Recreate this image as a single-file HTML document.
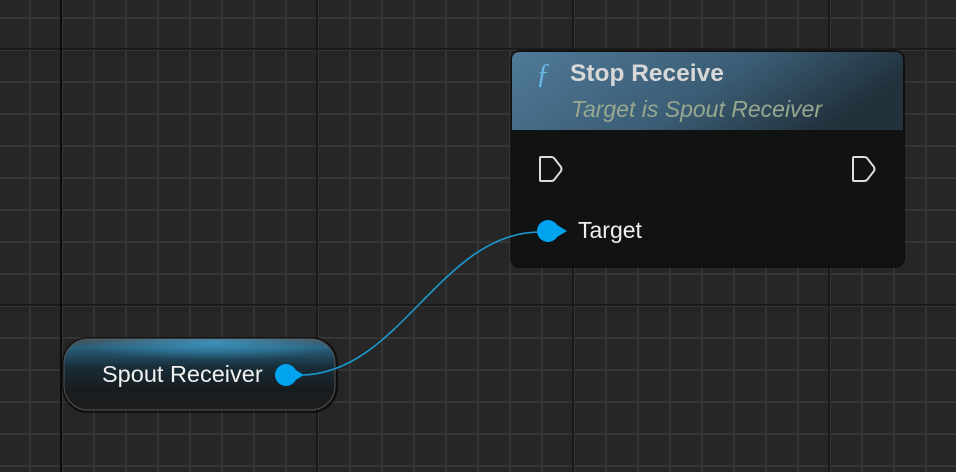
<!DOCTYPE html>
<html><head><style>
html,body{margin:0;padding:0;width:956px;height:472px;overflow:hidden;background:#262626}
svg{position:absolute;left:0;top:0}
.t{font-family:"Liberation Sans",sans-serif;position:absolute;white-space:nowrap}
</style></head><body>
<svg width="956" height="472">
<defs>
<pattern id="minor" x="29" y="17" width="32" height="32" patternUnits="userSpaceOnUse">
<rect x="0" y="0" width="2" height="32" fill="#353535"/><rect x="0" y="0" width="32" height="2" fill="#353535"/>
</pattern>
<linearGradient id="hdr" x1="0" y1="0" x2="1" y2="0.3">
<stop offset="0" stop-color="#4f7a99"/><stop offset="0.6" stop-color="#3b5c74"/><stop offset="1" stop-color="#22323d"/>
</linearGradient>
<linearGradient id="pill" x1="0" y1="0" x2="0" y2="1">
<stop offset="0" stop-color="#4a4f54"/><stop offset="0.12" stop-color="#285f7a"/><stop offset="0.4" stop-color="#182c38"/><stop offset="0.7" stop-color="#181c1f"/><stop offset="1" stop-color="#1e1e1e"/>
</linearGradient>
<radialGradient id="glow" cx="0.55" cy="0.1" r="0.5" gradientTransform="scale(1,0.5)">
<stop offset="0" stop-color="#3fa8dc" stop-opacity="0.7"/><stop offset="1" stop-color="#3fa8dc" stop-opacity="0"/>
</radialGradient>
</defs>
<rect width="956" height="472" fill="url(#minor)"/>
<rect x="0" y="48" width="956" height="2" fill="#1a1a1a"/>
<rect x="0" y="304" width="956" height="2" fill="#1a1a1a"/>
<rect x="60" y="0" width="2" height="472" fill="#0a0a0a"/>
<rect x="316" y="0" width="2" height="472" fill="#1a1a1a"/>
<rect x="572" y="0" width="2" height="472" fill="#1a1a1a"/>
<rect x="828" y="0" width="2" height="472" fill="#1a1a1a"/>
<rect x="510" y="50" width="395" height="218" rx="10" fill="#000" opacity="0.6"/>
<rect x="512" y="52" width="391" height="214" rx="8" fill="#111312"/>
<path d="M520 52 H895 Q903 52 903 60 V130 H512 V60 Q512 52 520 52Z" fill="url(#hdr)"/>
<path d="M541 157 H551 Q553 157 554 158 L561 167 Q562 169 561 171 L554 180 Q553 181 551 181 H541 Q540 181 540 180 V158 Q540 157 541 157Z" fill="none" stroke="#ddd" stroke-width="2"/>
<path d="M854 157 H864 Q866 157 867 158 L874 167 Q875 169 874 171 L867 180 Q866 181 864 181 H854 Q853 181 853 180 V158 Q853 157 854 157Z" fill="none" stroke="#ddd" stroke-width="2"/>
<rect x="62" y="337" width="276" height="76" rx="26" fill="#000" opacity="0.6"/>
<rect x="64" y="339" width="271" height="71" rx="24" fill="url(#pill)" stroke="#555" stroke-width="1"/>
<rect x="64" y="339" width="271" height="71" rx="24" fill="url(#glow)"/>
<path d="M300 375 C400 375 440 232 540 232" stroke="#1a9ad0" stroke-width="1.6" fill="none"/>
<circle cx="548" cy="231" r="11" fill="#00a3ee"/>
<path d="M557 225 L567 231 L557 237Z" fill="#00a3ee"/>
<circle cx="286" cy="375" r="11" fill="#00a3ee"/>
<path d="M294 369 L304 375 L294 381Z" fill="#00a3ee"/>
</svg>
<div class="t" style="left:536px;top:59px;font-family:'Liberation Serif',serif;font-style:italic;font-size:28px;color:#6ab8e8">ƒ</div>
<div class="t" style="left:570px;top:60px;font-size:24.5px;font-weight:bold;color:#d8d8d8">Stop Receive</div>
<div class="t" style="left:571px;top:96px;font-size:23px;font-style:italic;color:#98a88f">Target is Spout Receiver</div>
<div class="t" style="left:578px;top:217px;font-size:23px;color:#f0f0f0">Target</div>
<div class="t" style="left:102px;top:361px;font-size:23.5px;color:#f0f0f0">Spout Receiver</div>
</body></html>
